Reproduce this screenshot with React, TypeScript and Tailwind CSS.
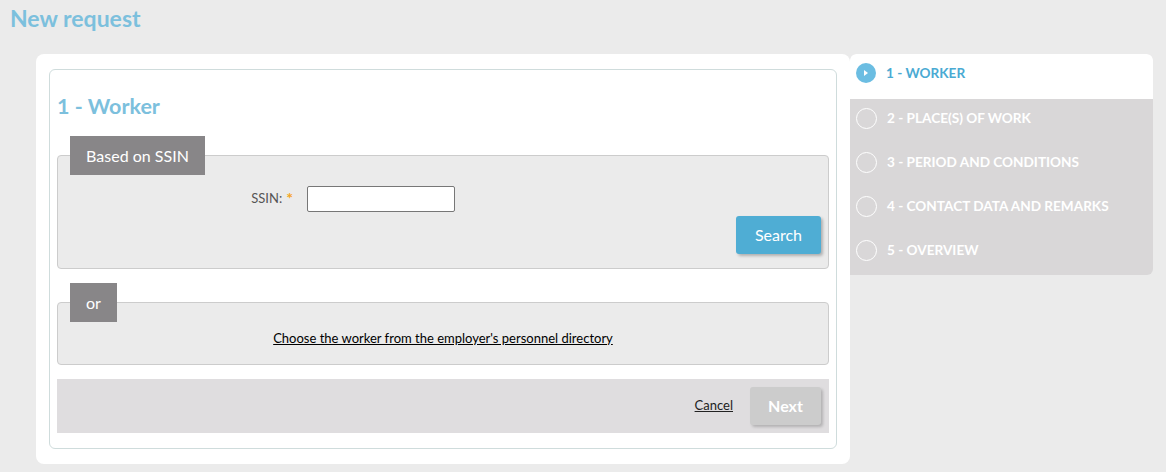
import React from "react";

const steps = [
  "1 - WORKER",
  "2 - PLACE(S) OF WORK",
  "3 - PERIOD AND CONDITIONS",
  "4 - CONTACT DATA AND REMARKS",
  "5 - OVERVIEW",
];

function Legend({ label, className }: { label: string; className: string }) {
  return (
    <div className={`absolute left-[12px] flex items-center bg-[#888688] text-white ${className}`}>{label}</div>
  );
}

function Sidebar() {
  return (
    <div className="w-[303px] overflow-hidden rounded-[6px] rounded-bl-none bg-[#d9d7d8]">
      {steps.map((step, i) => {
        const active = i === 0;
        return (
          <div
            key={step}
            className={`flex items-center gap-[10px] pl-[6px] ${active ? "h-[45px] bg-white pb-[7px]" : "h-[44px] pb-[5px]"}`}
          >
            {active ? (
              <span className="flex h-[20px] w-[20px] items-center justify-center rounded-full bg-[#6bbde2]">
                <svg width="8" height="8" viewBox="0 0 8 8">
                  <path d="M2 1 L6 4 L2 7 Z" fill="white" />
                </svg>
              </span>
            ) : (
              <span className="h-[21px] w-[21px] rounded-full border-[1.5px] border-white" />
            )}
            <span className={`text-[13.6px] font-bold ${active ? "text-[#4aaad3]" : "text-white"}`}>{step}</span>
          </div>
        );
      })}
    </div>
  );
}

export default function App() {
  return (
    <div className="h-[472px] w-[1166px] bg-[#ebebeb] font-['Lato',sans-serif] text-[#333]">
      <h1 className="px-[10px] pt-[4px] text-[23px] leading-[28px] font-bold text-[#7cc0dd]">New request</h1>
      <div className="mt-[22px] flex items-start pl-[36px]">
        <div className="w-[814px] rounded-[8px] bg-white px-[13px] pt-[15px] pb-[15px]">
          <div className="rounded-[6px] border border-[#cfdcdc] px-[7px] pt-[22px] pb-[15px]">
            <h2 className="text-[21.5px] leading-[28px] font-bold text-[#7cc0dd]">1 - Worker</h2>

            <div className="relative mt-[35px] h-[114px] rounded-[4px] border border-[#cccccc] bg-[#ebebeb]">
              <Legend label="Based on SSIN" className="top-[-20px] h-[39px] w-[135px] justify-center text-[16px]" />
              <div className="flex items-center pt-[30px]">
                <div className="flex w-[235px] items-start justify-end gap-[4px] text-[13px] text-[#555]">
                  <span>SSIN:</span>
                  <span className="mt-[-3px] text-[16px] font-bold text-[#f5a623]">*</span>
                </div>
                <input className="ml-[14px] h-[26px] w-[148px] rounded-[2px] border border-[#777] bg-white" />
              </div>
              <div className="flex justify-end pt-[4px] pr-[7px]">
                <button className="h-[38px] w-[85px] rounded-[3px] bg-[#4fadd4] text-[16px] text-white shadow-[2px_2px_3px_rgba(0,0,0,0.25)]">
                  Search
                </button>
              </div>
            </div>

            <div className="relative mt-[33px] h-[63px] rounded-[4px] border border-[#cccccc] bg-[#ebebeb]">
              <Legend label="or" className="top-[-20px] h-[39px] w-[47px] justify-center text-[16px]" />
              <div className="pt-[26px] text-center text-[13px] leading-[18px] text-black">
                <a href="#" className="underline">Choose the worker from the employer's personnel directory</a>
              </div>
            </div>

            <div className="mt-[14px] flex h-[54px] items-center justify-end gap-[17px] bg-[#dfdddf] pr-[8px]">
              <a href="#" className="text-[13px] text-[#222] underline">Cancel</a>
              <button className="h-[38px] w-[71px] rounded-[3px] bg-[#cccccc] text-[16px] font-bold text-white shadow-[2px_2px_3px_rgba(0,0,0,0.2)]">
                Next
              </button>
            </div>
          </div>
        </div>
        <Sidebar />
      </div>
    </div>
  );
}
